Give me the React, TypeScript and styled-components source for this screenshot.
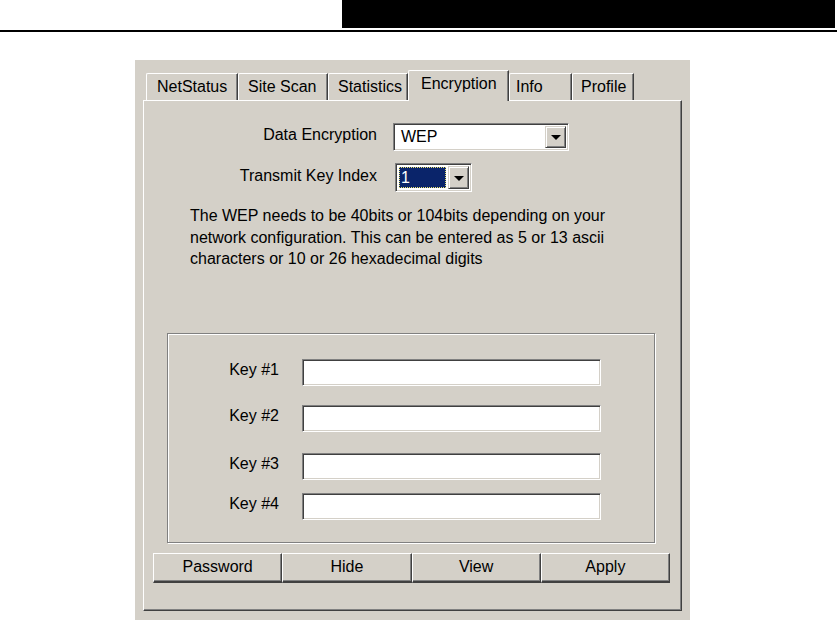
import styled, { createGlobalStyle } from 'styled-components';

const GlobalStyle = createGlobalStyle`
  html, body {
    margin: 0;
    padding: 0;
    background: #ffffff;
  }
  body {
    font-family: 'Liberation Sans', Arial, sans-serif;
    font-size: 16px;
    color: #000000;
  }
`;

type TabDef = { label: string; width: number; pad: number; active?: boolean };

const tabs: TabDef[] = [
  { label: 'NetStatus', width: 92, pad: 10 },
  { label: 'Site Scan', width: 90, pad: 9 },
  { label: 'Statistics', width: 80, pad: 9 },
  { label: 'Encryption', width: 101, pad: 12, active: true },
  { label: 'Info', width: 63, pad: 6 },
  { label: 'Profile', width: 62, pad: 8 },
];

const keys = [
  { label: 'Key #1', gap: 25 },
  { label: 'Key #2', gap: 19 },
  { label: 'Key #3', gap: 21 },
  { label: 'Key #4', gap: 13 },
];

const buttons = ['Password', 'Hide', 'View', 'Apply'];

function App() {
  return (
    <>
      <GlobalStyle />
      <Header>
        <HeaderBlock />
      </Header>
      <Rule />
      <Window>
        <TabStrip>
          {tabs.map((t) => (
            <Tab key={t.label} $width={t.width} $pad={t.pad} $active={t.active}>
              {t.label}
            </Tab>
          ))}
        </TabStrip>
        <Pane>
          <FieldRow $top={0}>
            <FieldLabel>Data Encryption</FieldLabel>
            <Combo $width={176} $height={28}>
              <ComboValue>WEP</ComboValue>
              <DropButton>
                <Arrow />
              </DropButton>
            </Combo>
          </FieldRow>
          <FieldRow $top={12}>
            <FieldLabel>Transmit Key Index</FieldLabel>
            <Combo $width={77} $height={29} $shift={2}>
              <SelectedValue>1</SelectedValue>
              <DropButton>
                <Arrow />
              </DropButton>
            </Combo>
          </FieldRow>
          <Description>
            The WEP needs to be 40bits or 104bits depending on your
            <br />
            network configuration. This can be entered as 5 or 13 ascii
            <br />
            characters or 10 or 26 hexadecimal digits
          </Description>
          <GroupBox>
            {keys.map((k) => (
              <KeyRow key={k.label} $top={k.gap}>
                <KeyLabel>{k.label}</KeyLabel>
                <KeyInput />
              </KeyRow>
            ))}
          </GroupBox>
          <ButtonRow>
            {buttons.map((b) => (
              <PushButton key={b}>{b}</PushButton>
            ))}
          </ButtonRow>
        </Pane>
      </Window>
    </>
  );
}

export default App;

const Header = styled.div`
  height: 28px;
  display: flex;
`;

const HeaderBlock = styled.div`
  margin-left: 342px;
  width: 493px;
  background: #000000;
`;

const Rule = styled.div`
  margin-top: 2px;
  height: 2px;
  background: #000000;
`;

const Window = styled.div`
  margin: 28px 0 0 135px;
  width: 555px;
  height: 560px;
  box-sizing: border-box;
  padding: 10px 8px 0;
  background: #d4d0c8;
`;

const TabStrip = styled.div`
  height: 30px;
  padding-left: 3px;
  display: flex;
  align-items: flex-end;
`;

const Tab = styled.div<{ $width: number; $pad: number; $active?: boolean }>`
  position: relative;
  box-sizing: border-box;
  width: ${(p) => p.$width}px;
  height: ${(p) => (p.$active ? 31 : 27)}px;
  margin-bottom: ${(p) => (p.$active ? -1 : 0)}px;
  padding-left: ${(p) => p.$pad}px;
  padding-bottom: ${(p) => (p.$active ? 4 : 0)}px;
  z-index: ${(p) => (p.$active ? 1 : 0)};
  display: flex;
  align-items: center;
  white-space: nowrap;
  background: #d4d0c8;
  border-top: 1px solid #ffffff;
  border-left: 1px solid #ffffff;
  border-right: 1px solid #404040;
  border-top-left-radius: 2px;
  box-shadow: inset -1px 0 0 #808080;
`;

const Pane = styled.div`
  width: 539px;
  height: 511px;
  box-sizing: border-box;
  padding-top: 22px;
  border-top: 1px solid #ffffff;
  border-left: 1px solid #ffffff;
  border-right: 1px solid #404040;
  border-bottom: 1px solid #404040;
  box-shadow: inset -1px -1px 0 #808080;
`;

const FieldRow = styled.div<{ $top: number }>`
  display: flex;
  align-items: center;
  gap: 16px;
  margin-top: ${(p) => p.$top}px;
`;

const FieldLabel = styled.div`
  width: 233px;
  text-align: right;
  white-space: nowrap;
  padding-bottom: 4px;
`;

const Sunken = styled.div`
  box-sizing: border-box;
  background: #ffffff;
  border-top: 1px solid #808080;
  border-left: 1px solid #808080;
  border-bottom: 1px solid #ffffff;
  border-right: 1px solid #ffffff;
  box-shadow: inset 1px 1px 0 #404040, inset -1px -1px 0 #d4d0c8;
`;

const Combo = styled(Sunken)<{ $width: number; $height: number; $shift?: number }>`
  width: ${(p) => p.$width}px;
  height: ${(p) => p.$height}px;
  margin-left: ${(p) => p.$shift ?? 0}px;
  padding: 2px;
  display: flex;
`;

const ComboValue = styled.div`
  flex: 1;
  padding-left: 5px;
  display: flex;
  align-items: center;
`;

const SelectedValue = styled.div`
  flex: 1;
  margin: 1px 2px 1px 1px;
  padding-left: 2px;
  display: flex;
  align-items: center;
  background: #0a246a;
  color: #ffffff;
  outline: 1px dotted #e8e070;
  outline-offset: -1px;
`;

const DropButton = styled.div`
  width: 21px;
  box-sizing: border-box;
  display: flex;
  align-items: center;
  justify-content: center;
  background: #d4d0c8;
  border: 1px solid;
  border-color: #d4d0c8 #404040 #404040 #d4d0c8;
  box-shadow: inset 1px 1px 0 #ffffff, inset -1px -1px 0 #808080;
`;

const Arrow = styled.div`
  width: 0;
  height: 0;
  border-left: 5px solid transparent;
  border-right: 5px solid transparent;
  border-top: 5px solid #000000;
  margin-top: 1px;
`;

const Description = styled.div`
  margin: 13px 0 0 46px;
  line-height: 21.5px;
  white-space: nowrap;
`;

const GroupBox = styled.div`
  margin: 63px 0 0 23px;
  width: 488px;
  height: 210px;
  box-sizing: border-box;
  border: 1px solid #808080;
  box-shadow: inset 1px 1px 0 #ffffff, 1px 1px 0 #ffffff;
`;

const KeyRow = styled.div<{ $top: number }>`
  display: flex;
  align-items: center;
  gap: 23px;
  margin-top: ${(p) => p.$top}px;
`;

const KeyLabel = styled.div`
  width: 111px;
  text-align: right;
  white-space: nowrap;
  padding-bottom: 5px;
`;

const KeyInput = styled(Sunken)`
  width: 299px;
  height: 27px;
`;

const ButtonRow = styled.div`
  display: flex;
  width: 517px;
  margin: 10px 0 0 9px;
`;

const PushButton = styled.div`
  flex: 1;
  height: 30px;
  box-sizing: border-box;
  display: flex;
  align-items: center;
  justify-content: center;
  background: #d4d0c8;
  border-top: 1px solid #ffffff;
  border-left: 1px solid #ffffff;
  border-right: 1px solid #404040;
  border-bottom: 2px solid #404040;
  box-shadow: inset -1px -1px 0 #808080;
`;
